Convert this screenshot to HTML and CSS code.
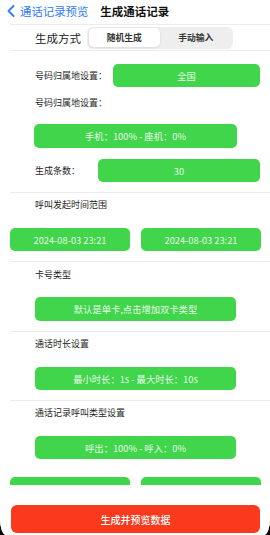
FILE: index.html
```html
<!DOCTYPE html>
<html lang="zh">
<head>
<meta charset="utf-8">
<link rel="stylesheet" href="styles.css">
</head>
<body>
<div class="screen">
  <div class="header">
    <svg class="chev" width="8" height="12" viewBox="0 0 8 12"><path d="M6.5 1 L1.5 6 L6.5 11" fill="none" stroke="#2f7bf5" stroke-width="1.8" stroke-linecap="round" stroke-linejoin="round"/></svg>
    <span class="back">通话记录预览</span>
    <span class="title">生成通话记录</span>
  </div>
  <div class="sep"></div>
  <div class="mode">
    <span class="mode-label">生成方式</span>
    <div class="seg">
      <div class="seg-item active">随机生成</div>
      <div class="seg-item">手动输入</div>
    </div>
  </div>
  <div class="sep"></div>

  <div class="row r1">
    <span class="label">号码归属地设置：</span>
    <div class="btn w147">全国</div>
  </div>
  <div class="label block l2">号码归属地设置：</div>
  <div class="btn b2">手机：100% - 座机：0%</div>
  <div class="row r3">
    <span class="label">生成条数：</span>
    <div class="btn w162">30</div>
  </div>
  <div class="sep s1"></div>

  <div class="label block sec">呼叫发起时间范围</div>
  <div class="pair">
    <div class="btn">2024-08-03 23:21</div>
    <div class="btn">2024-08-03 23:21</div>
  </div>
  <div class="sep s1"></div>

  <div class="label block sec2">卡号类型</div>
  <div class="btn wide tall">默认是单卡,点击增加双卡类型</div>
  <div class="sep s1"></div>

  <div class="label block sec">通话时长设置</div>
  <div class="btn wide">最小时长：1s - 最大时长：10s</div>
  <div class="sep s1"></div>

  <div class="label block sec">通话记录呼叫类型设置</div>
  <div class="btn wide">呼出：100% - 呼入：0%</div>

  <div class="pair p2">
    <div class="btn top">呼出时长</div>
    <div class="btn top">呼入时长</div>
  </div>

  <div class="footer">
    <div class="primary">生成并预览数据</div>
  </div>
</div>
</body>
</html>
```
FILE: styles.css
```css
html, body {
  margin: 0;
  padding: 0;
  background: #000;
}
body {
  width: 270px;
  height: 535px;
  overflow: hidden;
  font-family: "Noto Sans CJK SC", "Noto Sans", "Liberation Sans", sans-serif;
  color: #1d1d1f;
}
.screen {
  position: relative;
  width: 270px;
  height: 535px;
  background: #fff;
  overflow: hidden;
  border-radius: 0 0 6px 6px / 0 0 16px 16px;
}
.header {
  height: 24px;
  display: flex;
  align-items: center;
  padding-left: 7px;
  box-sizing: border-box;
  padding-bottom: 3px;
}
.chev {
  display: block;
  margin-right: 5px;
}
.back {
  font-size: 11.4px;
  color: #2f7bf5;
  line-height: 14px;
}
.title {
  margin-left: 12px;
  font-size: 11.5px;
  font-weight: 700;
  color: #111;
  line-height: 14px;
}
.sep {
  height: 1px;
  margin-left: 10px;
  background: #ececec;
}
.mode {
  height: 25px;
  display: flex;
  align-items: center;
  padding-left: 35px;
}
.mode-label {
  font-size: 11.5px;
  color: #222;
  width: 52px;
}
.seg {
  display: flex;
  width: 146px;
  height: 22px;
  box-sizing: border-box;
  padding: 1.5px;
  background: #eeeeef;
  border-radius: 6px;
}
.seg-item {
  flex: 1;
  display: flex;
  align-items: center;
  justify-content: center;
  font-size: 8.8px;
  font-weight: 600;
  color: #333;
  border-radius: 5px;
}
.seg-item.active {
  background: #fff;
  box-shadow: 0 0 0 0.5px #e0e0e0, 0 1px 2px rgba(0,0,0,0.08);
}
.label {
  font-size: 9px;
  color: #262626;
  line-height: 12px;
}
.block {
  display: block;
  height: 12px;
  padding-left: 35px;
}
.btn {
  background: #41d54b;
  color: rgba(255,255,255,0.9);
  font-size: 9.3px;
  height: 23px;
  border-radius: 5px;
  display: flex;
  align-items: center;
  justify-content: center;
  box-sizing: border-box;
  white-space: nowrap;
}
.row {
  display: flex;
  align-items: center;
  justify-content: space-between;
  padding-left: 35px;
  padding-right: 10px;
}
.r1 { margin-top: 13px; }
.w147 { width: 147px; }
.l2 { margin-top: 10px; }
.b2 {
  margin-top: 15px;
  margin-left: 34px;
  width: 203px;
  height: 24px;
}
.r3 { margin-top: 11px; }
.w162 { width: 162px; }
.s1 { margin-top: 10px; }
.sec { margin-top: 6px; }
.sec2 { margin-top: 7px; }
.pair {
  display: flex;
  gap: 11px;
  padding: 0 9px 0 10px;
  margin-top: 17px;
}
.pair .btn { flex: 1; }
.pair .top { padding-top: 14px; }
.p2 { margin-top: 18px; }
.wide {
  margin-top: 17px;
  margin-left: 35px;
  width: 201px;
}
.tall {
  margin-top: 16px;
  height: 24px;
}
.footer {
  position: absolute;
  left: 0;
  right: 0;
  bottom: 0;
  height: 50px;
  background: #fff;
  padding: 20px 10px 0 11px;
  box-sizing: border-box;
}
.primary {
  height: 28px;
  background: #fb3a1d;
  border-radius: 6px;
  color: #fff;
  font-size: 10px;
  font-weight: 500;
  display: flex;
  align-items: center;
  justify-content: center;
}
```
